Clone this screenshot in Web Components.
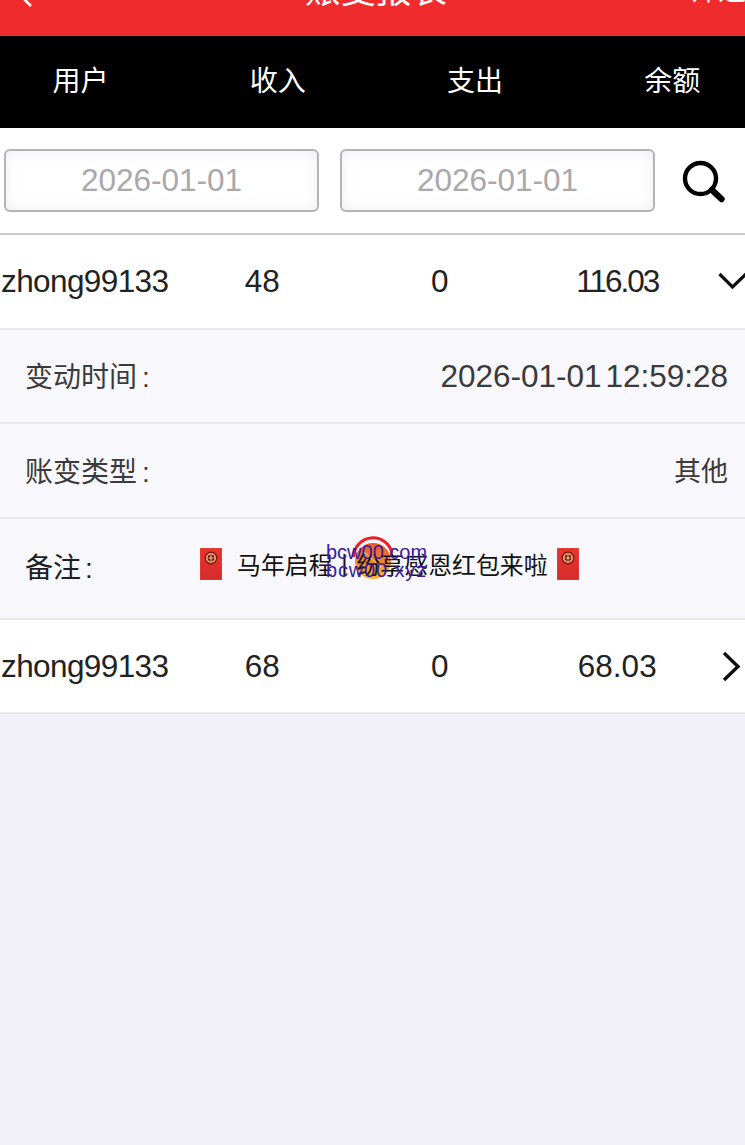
<!DOCTYPE html>
<html lang="zh"><head><meta charset="utf-8"><title>账变报表</title>
<style>
html,body{margin:0;padding:0;background:#f2f1fa;font-family:"Liberation Sans","Noto Sans CJK SC",sans-serif;}
body{width:745px;height:1145px;overflow:hidden;}
</style></head><body>
<app-page>
  <top-bar title="账变报表" action="筛选"></top-bar>
  <col-bar labels="用户,收入,支出,余额"></col-bar>
  <search-bar start="2026-01-01" end="2026-01-01"></search-bar>
  <report-row user="zhong99133" income="48" out="0" balance="116.03" tight open></report-row>
  <detail-row label="变动时间" value="2026-01-01 12:59:28"></detail-row>
  <detail-row label="账变类型" value="其他" cjk tall></detail-row>
  <remark-row label="备注" text="马年启程丨纷享感恩红包来啦"></remark-row>
  <report-row user="zhong99133" income="68" out="0" balance="68.03"></report-row>
</app-page>
<script>
const CJK='"Liberation Sans","Noto Sans CJK SC",sans-serif';
function el(name,render){customElements.define(name,class extends HTMLElement{connectedCallback(){if(!this.shadowRoot){this.attachShadow({mode:'open'}).innerHTML=render(this);}}});}
el('app-page',()=>`<style>:host{display:block;width:745px;height:1145px;background:#f2f1fa;position:relative;overflow:hidden;font-family:${CJK}}</style><slot></slot>`);
el('top-bar',h=>`<style>
:host{display:flex;box-sizing:border-box;height:36px;background:#ef2b2e;overflow:hidden;color:#fff;position:relative;align-items:flex-end;justify-content:center;padding-left:7px}
.t{font-size:35.5px;line-height:50px;margin-bottom:20px;white-space:nowrap}
.a{position:absolute;left:690px;bottom:20px;font-size:28px;line-height:50px;white-space:nowrap;width:60px}
svg{position:absolute;left:20px;top:-12px}
</style><svg width="14" height="20" viewBox="0 0 14 20"><path d="M11 2 3 10l8 8" fill="none" stroke="#fff" stroke-width="2.6"/></svg><div class="t">${h.getAttribute('title')}</div><div class="a">${h.getAttribute('action')}</div>`);
el('col-bar',h=>`<style>
:host{display:grid;box-sizing:border-box;grid-template-columns:repeat(4,197.25px);height:92px;background:#000;color:#fff;font-size:28px;align-items:center;justify-items:center;margin-left:-18px;width:763px;padding-bottom:6px}
</style>`+h.getAttribute('labels').split(',').map(s=>`<div>${s}</div>`).join(''));
el('date-box',h=>`<style>
:host{display:flex;flex:none;box-sizing:border-box;width:315px;height:63px;border:2px solid #b5b3b8;border-radius:6px;background:#fff;box-shadow:inset 0 0 14px rgba(215,212,225,.45);color:#a9a8ac;font-size:31.5px;align-items:center;justify-content:center}
</style><slot></slot>`);
el('search-bar',h=>`<style>
:host{display:flex;box-sizing:border-box;height:107px;background:#fff;border-bottom:2px solid #c9c8cc;padding:21px 0 0 4px;align-items:flex-start;gap:21px}
svg{flex:none;margin:11px 0 0 6px}
</style><date-box>${h.getAttribute('start')}</date-box><date-box>${h.getAttribute('end')}</date-box>
<svg width="44" height="44" viewBox="0 0 44 44"><circle cx="18.5" cy="18.5" r="15.5" fill="none" stroke="#000" stroke-width="4.4"/><path d="M30 30 39.5 39" stroke="#000" stroke-width="6.4" stroke-linecap="round"/></svg>`);
el('report-row',h=>{const o=h.hasAttribute('open');return `<style>
:host{display:grid;box-sizing:border-box;grid-template-columns:repeat(4,177.5px) 1fr;height:${o?95:94}px;padding-bottom:${o?1:0}px;width:749px;margin-left:-4px;background:#fff;border-bottom:2px solid #e8e6ec;color:#222;align-items:center;justify-items:center;font-size:31.5px;line-height:36px}
svg{justify-self:start;display:block}
.u{letter-spacing:-.6px}
.b{letter-spacing:${h.hasAttribute('tight')?'-2px':'0'}}
</style><div class="u">${h.getAttribute('user')}</div><div>${h.getAttribute('income')}</div><div>${h.getAttribute('out')}</div><div class="b">${h.getAttribute('balance')}</div>`+
(o?`<svg style="margin-left:12px" width="31" height="20" viewBox="0 0 31 20"><path d="M1.5 3 14.5 16 28 3" fill="none" stroke="#111" stroke-width="3.2"/></svg>`
  :`<svg style="margin-left:14px" width="22" height="32" viewBox="0 0 22 32"><path d="M4 3 18 16.5 4 30" fill="none" stroke="#111" stroke-width="3.4"/></svg>`)});
el('detail-row',h=>`<style>
:host{display:flex;box-sizing:border-box;height:${h.hasAttribute('tall')?95:94}px;padding:0 17px 2px 25px;background:#f8f7fb;border-bottom:2px solid #e8e6ec;justify-content:space-between;align-items:center;color:#3a3a3c;font-size:28px}
.v{font-size:${h.hasAttribute('cjk')?'27px':'31.5px'};word-spacing:-5px;padding-top:${h.hasAttribute('cjk')?0:3}px}
.c{margin-left:5px}
</style><div>${h.getAttribute('label')}<span class="c">:</span></div><div class="v">${h.getAttribute('value')}</div>`);
el('red-packet',()=>`<style>:host{display:block;flex:none;width:22px;height:32px}svg{display:block}</style>
<svg width="22" height="32" viewBox="0 0 22 32"><defs><linearGradient id="g" x1="0" y1="0" x2="0" y2="1"><stop offset="0" stop-color="#ea332f"/><stop offset="1" stop-color="#d42c2c"/></linearGradient></defs><rect width="22" height="32" fill="url(#g)" stroke="#dc6a50" stroke-width=".5"/><circle cx="11" cy="10" r="6.4" fill="#7d1513"/><circle cx="11" cy="10" r="4.2" fill="none" stroke="#f0b878" stroke-width="1.6"/><path d="M11 7v6M8.6 10h4.8" stroke="#f5cf98" stroke-width="1"/></svg>`);
el('remark-row',h=>`<style>
:host{display:flex;box-sizing:border-box;height:101px;background:#f8f7fb;border-bottom:2px solid #e8e6ec;position:relative;align-items:center;padding-left:25px;color:#1e1e20;font-size:28px}
.l{width:175px;flex:none;margin-bottom:6px}
.c{margin-left:4px}
.m{display:flex;align-items:center;font-size:23.9px;color:#111;gap:15px;position:relative;margin-bottom:10px}
.tx{white-space:nowrap}
.m red-packet:last-child{margin-left:-6px}
.wm{position:absolute;left:326px;top:24px;width:103px;color:#3d1c9c;font-size:20px;line-height:18px;pointer-events:none}
.wm div:last-child{letter-spacing:.85px}
.logo{position:absolute;left:352px;top:17px}
</style><div class="l">${h.getAttribute('label')}<span class="c">:</span></div>
<svg class="logo" width="42" height="46" viewBox="0 0 42 46"><defs><linearGradient id="o" x1="0" y1="0" x2="0" y2="1"><stop offset="0" stop-color="#e8552c"/><stop offset="1" stop-color="#fcb72a"/></linearGradient></defs><circle cx="21" cy="25" r="18" fill="url(#o)"/><path d="M1.5 21A19.5 19.5 0 0 1 40 17" fill="none" stroke="#ee1c25" stroke-width="3"/><path d="M12 16 30 32" stroke="#fff" stroke-width="1" opacity=".7"/></svg>
<div class="m"><red-packet></red-packet><span class="tx">${h.getAttribute('text')}</span><red-packet></red-packet></div>
<div class="wm"><div>bcw00.com</div><div>bcw00.xyz</div></div>`);
</script></body></html>
